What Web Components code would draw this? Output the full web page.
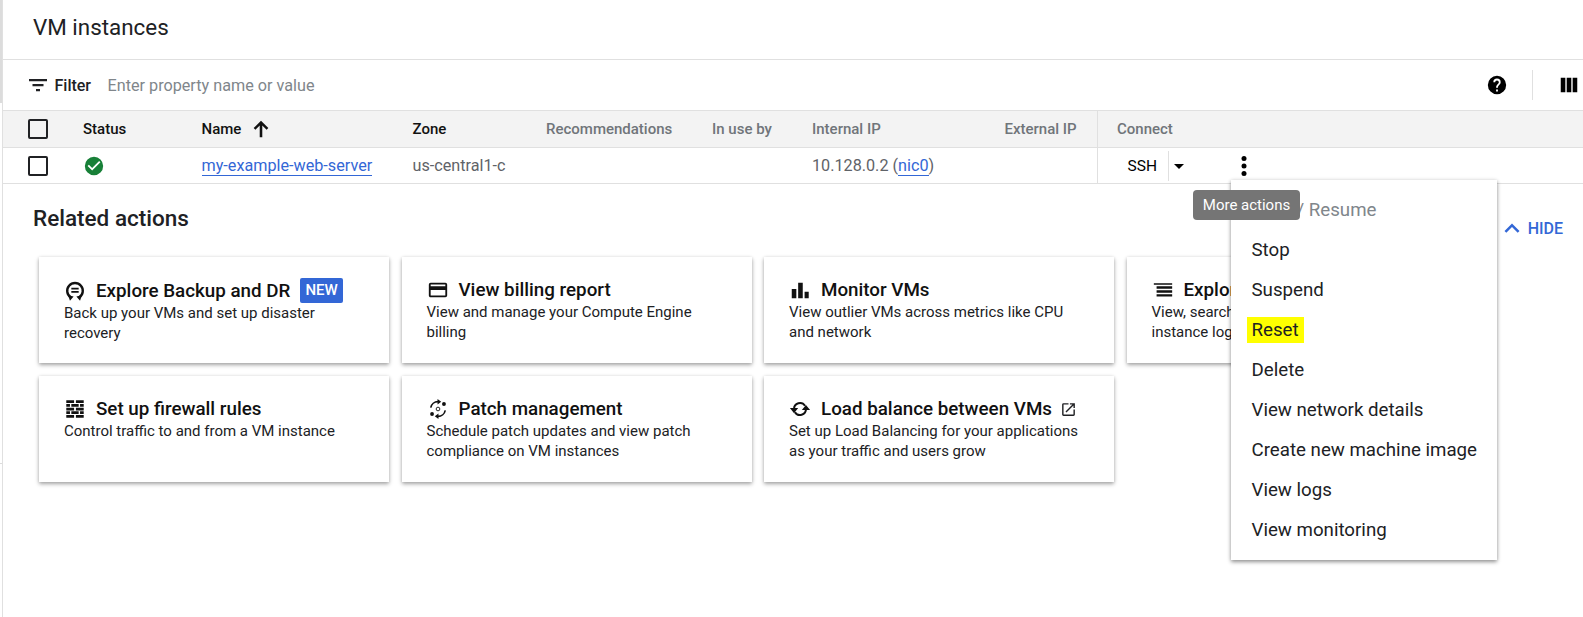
<!DOCTYPE html>
<html>
<head>
<meta charset="utf-8">
<title>VM instances</title>
<style>
    html, body { margin: 0; height: 100%; overflow: hidden; background: #fff; }
    body { font-family: Roboto, "Liberation Sans", sans-serif; color: #202124; }
</style>
</head>
<body>
<vm-page>
    <vm-toolbar slot="toolbar"></vm-toolbar>
    <vm-table slot="table"></vm-table>
    <related-actions slot="related">
        <action-card title="Explore Backup and DR" icon="backup" badge="NEW">Back up your VMs and set up disaster recovery</action-card>
        <action-card title="View billing report" icon="billing">View and manage your Compute Engine billing</action-card>
        <action-card title="Monitor VMs" icon="bars">View outlier VMs across metrics like CPU and network</action-card>
        <action-card title="Explore VM logs" icon="logs">View, search, analyze, and download VM instance logs</action-card>
        <action-card title="Set up firewall rules" icon="firewall">Control traffic to and from a VM instance</action-card>
        <action-card title="Patch management" icon="patch">Schedule patch updates and view patch compliance on VM instances</action-card>
        <action-card title="Load balance between VMs" icon="sync" external>Set up Load Balancing for your applications as your traffic and users grow</action-card>
    </related-actions>
    <more-menu slot="overlay"></more-menu>
</vm-page>

<script>
const icons = {
    filter: `<path d="M3 6h18v2.200H3zM6.500 11h11v2.200h-11zM10 16h4v2.200h-4z"/>`,
    help: `<path d="M12 2a10 10 0 1 0 0 20 10 10 0 0 0 0-20zm1 17h-2v-2h2v2zm2.070-7.750-.9.920C13.450 12.900 13 13.500 13 15h-2v-.5c0-1.100.450-2.100 1.170-2.830l1.240-1.260c.370-.360.590-.860.590-1.410a2 2 0 0 0-4 0H8a4 4 0 0 1 8 0c0 .880-.360 1.680-.930 2.250z"/>`,
    columns: `<path d="M3 4h5v16H3zM9.500 4h5v16h-5zM16 4h5v16h-5z"/>`,
    arrowUp: `<path d="M12 3 4 11l1.900 1.900 4.700-4.700V21h2.800V8.200l4.700 4.700L20 11z"/>`,
    check: `<path d="M12 2a10 10 0 1 0 0 20 10 10 0 0 0 0-20zm-2 15-5-5 1.410-1.410L10 14.170l7.590-7.590L19 8l-9 9z"/>`,
    caret: `<path d="M7 10l5 5 5-5z"/>`,
    kebab: `<circle cx="12" cy="4.500" r="2.500"/><circle cx="12" cy="12" r="2.500"/><circle cx="12" cy="19.500" r="2.500"/>`,
    chevronUp: `<path d="M12 7.500l-7.500 7.500 1.800 1.800 5.700-5.700 5.700 5.700 1.800-1.800z"/>`,
    backup: `<path d="M7.500 19A8.500 8.500 0 1 1 16.500 19" fill="none" stroke="currentColor" stroke-width="2.600"/><path d="M4.500 16.500 10.500 18l-4 4.500zM19.500 16.500 13.500 18l4 4.500z"/><path d="M8 8.500h8v1.800H8zM8 12h8v1.800H8z"/>`,
    billing: `<path d="M20 4H4a2 2 0 0 0-2 2v12c0 1.100.9 2 2 2h16a2 2 0 0 0 2-2V6a2 2 0 0 0-2-2zm0 14H4v-6h16v6zm0-10H4V6h16v2z"/>`,
    bars: `<path d="M3 11h5v10H3zM10 4h5v17h-5zM17 14h4.500v7H17z"/>`,
    logs: `<path d="M2 4.500h20v1.800H2zM5 8h17v2.600H5zM5 12.300h17v2.600H5zM5 16.600h17v2.600H5z"/>`,
    firewall: `<path d="M2.500 2.500H11v3H2.500zM13 2.500h8.500v3H13zM2.500 6.500h4v3h-4zM8 6.500h8v3H8zM17.500 6.500h4v3h-4zM2.500 10.500H11v3H2.500zM13 10.500h8.500v3H13zM2.500 14.500h4v3h-4zM8 14.500h8v3H8zM17.500 14.500h4v3h-4zM2.500 18.500H11v3H2.500zM13 18.500h8.500v3H13z"/>`,
    patch: `<circle cx="12" cy="12" r="2" fill="none" stroke="currentColor" stroke-width="1"/><path d="M4.100 10.500A8 8 0 0 1 12 4M19.900 13.500A8 8 0 0 1 12 20" fill="none" stroke="currentColor" stroke-width="1.800"/><path d="M11.500 1l4 3-4 3zM12.500 17l-4 3 4 3z"/><circle cx="18.500" cy="6.500" r="2.100"/><circle cx="5.500" cy="17.500" r="2.100"/>`,
    sync: `<path d="M5.500 12A6.500 6.500 0 0 1 17.500 8.500M18.500 12A6.500 6.500 0 0 1 6.500 15.500" fill="none" stroke="currentColor" stroke-width="2.200"/><path d="M1 11h9l-4.500 5.500zM14 13h9l-4.500-5.500z"/>`,
    external: `<path d="M19 19H5V5h7V3H5a2 2 0 0 0-2 2v14c0 1.100.9 2 2 2h14a2 2 0 0 0 2-2v-7h-2v7zM14 3v2h3.590l-9.830 9.830 1.410 1.410L19 6.410V10h2V3h-7z"/>`
};

function icon(name, size) {
    return `<svg viewBox="0 0 24 24" width="${size}" height="${size}" fill="currentColor" style="display:block;flex:none">${icons[name]}</svg>`;
}

class VmPage extends HTMLElement {
    constructor() {
        super();
        this.attachShadow({ mode: "open" }).innerHTML = `
            <style>
                :host {
                    display: block;
                    position: relative;
                    height: 617px;
                    margin-left: 2px;
                    border-left: 1px solid #e0e0e0;
                    box-sizing: border-box;
                }
                header {
                    height: 60px;
                    box-sizing: border-box;
                    padding: 12px 0 0 30px;
                    font-size: 22.400px;
                    line-height: 30px;
                    color: #202124;
                    border-bottom: 1px solid #e0e0e0;
                }
                .rail { position: absolute; left: -3px; width: 2px; background: #dcdcdc; }
            </style>
            <span class="rail" style="top: 0; height: 103px"></span>
            <span class="rail" style="top: 463px; height: 1px"></span>
            <header>VM instances</header>
            <slot name="toolbar"></slot>
            <slot name="table"></slot>
            <slot name="related"></slot>
            <slot name="overlay"></slot>
        `;
    }
}

class VmToolbar extends HTMLElement {
    constructor() {
        super();
        this.attachShadow({ mode: "open" }).innerHTML = `
            <style>
                :host {
                    display: flex;
                    align-items: center;
                    height: 50px;
                    padding-left: 23px;
                    padding-right: 3px;
                    font-size: 16.200px;
                }
                .filter { margin-left: 4.500px; font-weight: 500; font-size: 16px; color: #202124; }
                .hint { margin-left: 16.500px; color: #80868b; flex: 1; }
                .sep { width: 1px; height: 30px; background: #e0e0e0; margin: 0 25px 0 24px; }
                .help, .cols { color: #000; }
            </style>
            ${icon("filter", 24)}
            <span class="filter">Filter</span>
            <span class="hint">Enter property name or value</span>
            <span class="help">${icon("help", 22)}</span>
            <span class="sep"></span>
            <span class="cols">${icon("columns", 22)}</span>
        `;
    }
}

class VmTable extends HTMLElement {
    constructor() {
        super();
        this.attachShadow({ mode: "open" }).innerHTML = `
            <style>
                :host { display: block; font-size: 15px; }
                .row {
                    display: grid;
                    grid-template-columns: 80px 118.500px 211px 133.500px 166px 100px 192.500px 92.500px 1fr;
                    align-items: center;
                    box-sizing: border-box;
                    border-top: 1px solid #e0e0e0;
                }
                .head { height: 37px; background: #f3f3f3; font-weight: 500; color: #70757a; }
                .body { height: 37px; color: #5f6368; font-size: 16.200px; border-bottom: 1px solid #e0e0e0; }
                .dark { color: #111; }
                .box {
                    width: 16px;
                    height: 16px;
                    margin-left: 25px;
                    border: 2px solid #202124;
                    border-radius: 2px;
                }
                a { color: #3367d6; text-decoration: none; border-bottom: 1px solid #3367d6; }
                .cell { white-space: nowrap; }
                .status { color: #188038; }
                .sort { display: flex; align-items: center; gap: 9px; color: #111; }
                .connect {
                    align-self: stretch;
                    display: flex;
                    align-items: center;
                    border-left: 1px solid #e0e0e0;
                    padding-left: 19px;
                }
                .ssh { color: #000; margin-left: 10.500px; width: 40px; font-size: 15.500px; }
                .split { width: 1px; height: 30px; background: #e0e0e0; }
                .caret { color: #000; margin-left: -2px; }
                .kebab { color: #000; margin-left: 41.500px; }
            </style>
            <div class="row head">
                <div class="box"></div>
                <div class="cell dark">Status</div>
                <div class="cell sort">Name ${icon("arrowUp", 22)}</div>
                <div class="cell dark">Zone</div>
                <div class="cell">Recommendations</div>
                <div class="cell">In use by</div>
                <div class="cell">Internal IP</div>
                <div class="cell">External IP</div>
                <div class="connect">Connect</div>
            </div>
            <div class="row body">
                <div class="box"></div>
                <div class="status">${icon("check", 22)}</div>
                <div class="cell"><a>my-example-web-server</a></div>
                <div class="cell">us-central1-c</div>
                <div class="cell"></div>
                <div class="cell"></div>
                <div class="cell">10.128.0.2 (<a>nic0</a>)</div>
                <div class="cell"></div>
                <div class="connect">
                    <span class="ssh">SSH</span><span class="split"></span>
                    <span class="caret">${icon("caret", 24)}</span>
                    <span class="kebab">${icon("kebab", 24)}</span>
                </div>
            </div>
        `;
    }
}

class RelatedActions extends HTMLElement {
    constructor() {
        super();
        this.attachShadow({ mode: "open" }).innerHTML = `
            <style>
                :host { display: block; position: relative; }
                .top { display: flex; justify-content: space-between; padding: 20px 20px 0 30px; height: 52px; box-sizing: border-box; }
                h2 { margin: 0; font-size: 22.500px; line-height: 28px; font-weight: 500; color: #202124; }
                .hide {
                    display: flex; align-items: center; gap: 4px;
                    color: #3367d6; font-weight: 500; font-size: 16px;
                    height: 24px; margin-top: 12px;
                }
                .grid {
                    display: grid;
                    grid-template-columns: repeat(4, 350px);
                    column-gap: 12.500px;
                    row-gap: 13px;
                    padding: 21px 0 0 36px;
                }
            </style>
            <div class="top">
                <h2>Related actions</h2>
                <div class="hide">${icon("chevronUp", 24)}HIDE</div>
            </div>
            <div class="grid"><slot></slot></div>
        `;
    }
}

class ActionCard extends HTMLElement {
    constructor() {
        super();
        this.attachShadow({ mode: "open" }).innerHTML = `
            <style>
                :host {
                    display: block;
                    height: 106px;
                    box-sizing: border-box;
                    padding: 21px 26px 0 25px;
                    background: #fff;
                    box-shadow: 0 2px 4px rgba(0,0,0,.35), 0 0 3px rgba(0,0,0,.08);
                }
                .title {
                    display: flex; align-items: center;
                    font-size: 18.800px; font-weight: 500; line-height: 24px; color: #111;
                    white-space: nowrap; min-height: 24px;
                }
                .ico { width: 32px; flex: none; color: #111; }
                .badge {
                    background: #3367d6; color: #fff; font-size: 15px;
                    padding: 0 5px; margin-left: 10px; line-height: 25px; border-radius: 2px;
                }
                .ext { margin-left: 8px; color: #202124; }
                .desc { font-size: 15px; line-height: 20px; color: #202124; }
            </style>
            <div class="title"><span class="ico"></span><span class="t"></span></div>
            <div class="desc"><slot></slot></div>
        `;
    }

    connectedCallback() {
        const title = this.shadowRoot.querySelector(".title");
        this.shadowRoot.querySelector(".t").textContent = this.getAttribute("title");
        this.shadowRoot.querySelector(".ico").innerHTML = icon(this.getAttribute("icon"), 22);
        if (this.hasAttribute("badge")) {
            const badge = document.createElement("span");
            badge.className = "badge";
            badge.textContent = this.getAttribute("badge");
            title.append(badge);
        }
        if (this.hasAttribute("external")) {
            const ext = document.createElement("span");
            ext.className = "ext";
            ext.innerHTML = icon("external", 17);
            title.append(ext);
        }
    }
}

class MoreMenu extends HTMLElement {
    constructor() {
        super();
        const items = ["Stop", "Suspend", "Reset", "Delete", "View network details", "Create new machine image", "View logs", "View monitoring"];
        this.attachShadow({ mode: "open" }).innerHTML = `
            <style>
                :host {
                    display: block;
                    position: absolute;
                    left: 1228px;
                    top: 180px;
                    width: 266px;
                    height: 380px;
                    padding-top: 10px;
                    box-sizing: border-box;
                    background: #fff;
                    box-shadow: 0 2px 4px rgba(0,0,0,.4), 0 0 4px rgba(0,0,0,.1);
                    font-size: 18.700px;
                    color: #202124;
                }
                .item { height: 40px; line-height: 40px; padding-left: 20.500px; white-space: nowrap; }
                .off { color: #80868b; }
                mark { background: #ffff00; color: inherit; padding: 2px 5px; margin-left: -5px; }
                .tip {
                    position: absolute;
                    left: -38px;
                    top: 10px;
                    width: 107px;
                    height: 30px;
                    line-height: 30px;
                    text-align: center;
                    border-radius: 4px;
                    background: #757575;
                    color: #fff;
                    font-size: 15px;
                }
            </style>
            <div class="item off">Start / Resume</div>
            ${items.map(i => `<div class="item">${i === "Reset" ? `<mark>${i}</mark>` : i}</div>`).join("")}
            <div class="tip">More actions</div>
        `;
    }
}

customElements.define("vm-page", VmPage);
customElements.define("vm-toolbar", VmToolbar);
customElements.define("vm-table", VmTable);
customElements.define("related-actions", RelatedActions);
customElements.define("action-card", ActionCard);
customElements.define("more-menu", MoreMenu);
</script>
</body>
</html>
